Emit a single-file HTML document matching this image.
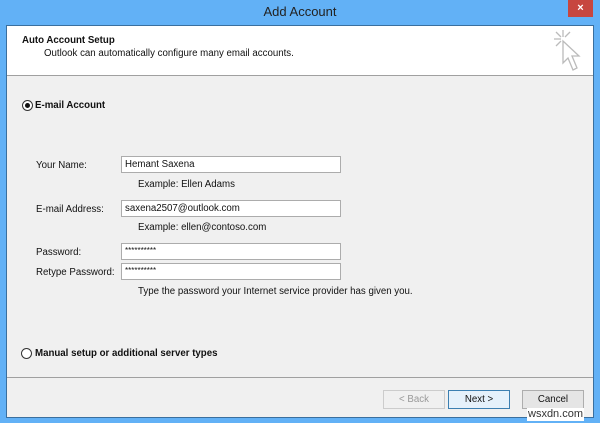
<!DOCTYPE html>
<html><head><style>
*{margin:0;padding:0;box-sizing:border-box}
body{width:600px;height:423px;background:#62b1f6;position:relative;overflow:hidden;font-family:"Liberation Sans",sans-serif;font-size:9.7px;color:#111}
.a{position:absolute;white-space:nowrap}
.win{position:absolute;left:6px;top:25px;width:588px;height:393px;background:#f0f0f0;border:1px solid #3a6f9e}
.inp{position:absolute;left:121px;width:220px;height:17px;background:#fff;border:1px solid #acacac;padding:2px 3px;font-size:9.7px}
.btn{position:absolute;top:390px;height:19px;border:1px solid #adadad;background:#e5e5e5;text-align:center;line-height:17px;font-size:9.7px}
.rad{position:absolute;width:11px;height:11px;border:1px solid #333;border-radius:50%;background:#fff}
</style></head><body>
<div class="a" style="left:0;top:4px;width:600px;text-align:center;font-size:13px;color:#222">Add Account</div>
<div class="a" style="left:568px;top:0;width:25px;height:17px;background:#c7463f;color:#fff;text-align:center;font-size:11px;line-height:16px;font-weight:bold">×</div>
<div class="win"></div>
<div class="a" style="left:7px;top:26px;width:586px;height:50px;background:#fff;border-bottom:1px solid #a0a0a0"></div>
<div class="a" style="left:22px;top:35px;font-weight:bold">Auto Account Setup</div>
<div class="a" style="left:44px;top:48px">Outlook can automatically configure many email accounts.</div>
<svg class="a" style="left:552px;top:28px" width="32" height="46" viewBox="0 0 32 46"><g stroke="#bbb" stroke-width="1.3" fill="none"><path d="M11 2V9M2 11H9M4 4L9 9M18 4L13 9M4 18L9 13"/><path d="M11 13L11 35L16 30L21 42L25 40L20 28L27 28Z" fill="#fff"/></g></svg>
<div class="rad" style="left:22px;top:100px"><div style="position:absolute;left:2px;top:2px;width:5px;height:5px;border-radius:50%;background:#111"></div></div>
<div class="a" style="left:35px;top:100px;font-weight:bold">E-mail Account</div>
<div class="a" style="left:36px;top:160px">Your Name:</div>
<div class="inp" style="top:156px">Hemant Saxena</div>
<div class="a" style="left:138px;top:179px">Example: Ellen Adams</div>
<div class="a" style="left:36px;top:204px">E-mail Address:</div>
<div class="inp" style="top:200px">saxena2507@outlook.com</div>
<div class="a" style="left:138px;top:222px">Example: ellen@contoso.com</div>
<div class="a" style="left:36px;top:247px">Password:</div>
<div class="inp" style="top:243px;font-size:8px">**********</div>
<div class="a" style="left:36px;top:267px">Retype Password:</div>
<div class="inp" style="top:263px;font-size:8px">**********</div>
<div class="a" style="left:138px;top:286px">Type the password your Internet service provider has given you.</div>
<div class="rad" style="left:21px;top:348px"></div>
<div class="a" style="left:35px;top:348px;font-weight:bold">Manual setup or additional server types</div>
<div class="a" style="left:7px;top:377px;width:586px;height:1px;background:#a0a0a0"></div>
<div class="btn" style="left:383px;width:62px;color:#999;background:#f0f0f0;border-color:#ccc">&lt; Back</div>
<div class="btn" style="left:448px;width:62px;border-color:#3c7fb1;background:#e5f1fb">Next &gt;</div>
<div class="btn" style="left:522px;width:62px">Cancel</div>
<div class="a" style="left:527px;top:408px;font-size:11px;line-height:13px;color:#333;background:#fff;padding:0 1px">wsxdn.com</div>
</body></html>
